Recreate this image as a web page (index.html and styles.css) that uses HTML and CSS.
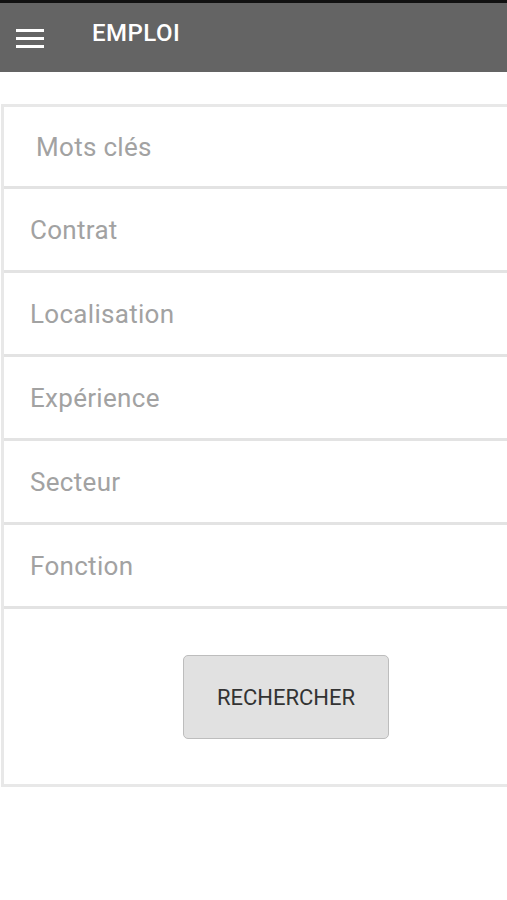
FILE: index.html
```html
<!DOCTYPE html>
<html lang="fr">
<head>
<meta charset="utf-8">
<title>Emploi</title>
<link rel="stylesheet" href="styles.css">
</head>
<body>
<header class="appbar">
  <button class="menu-btn" aria-label="Menu">
    <svg width="28" height="20" viewBox="0 0 28 20"><rect x="0" y="0" width="28" height="3" fill="#fff"/><rect x="0" y="8" width="28" height="3" fill="#fff"/><rect x="0" y="16" width="28" height="3" fill="#fff"/></svg>
  </button>
  <h1 class="title">EMPLOI</h1>
</header>
<main class="form">
  <div class="field first"><span class="placeholder">Mots clés</span></div>
  <div class="field"><span class="placeholder">Contrat</span></div>
  <div class="field"><span class="placeholder">Localisation</span></div>
  <div class="field"><span class="placeholder">Expérience</span></div>
  <div class="field"><span class="placeholder">Secteur</span></div>
  <div class="field"><span class="placeholder">Fonction</span></div>
  <div class="actions"><button class="search-btn">RECHERCHER</button></div>
</main>
</body>
</html>
```
FILE: styles.css
```css
html, body {
  margin: 0;
  padding: 0;
  background: #fff;
  font-family: Roboto, "Noto Sans", sans-serif;
  overflow: hidden;
}
.appbar {
  height: 69px;
  border-top: 3px solid #111;
  background: #646464;
  display: flex;
  align-items: center;
}
.menu-btn {
  border: 0;
  background: none;
  padding: 0;
  margin-left: 16px;
  width: 28px;
  height: 20px;
  display: flex;
  margin-top: 2px;
}
.title {
  margin: 0 0 0 48px;
  color: #fff;
  font-size: 24px;
  font-weight: 500;
  letter-spacing: 0.5px;
  margin-top: -10px;
}
.form {
  margin-top: 32px;
  margin-left: 1px;
  border-left: 3px solid #e8e8e8;
  border-top: 3px solid #e8e8e8;
}
.field {
  height: 81px;
  border-bottom: 3px solid #e3e3e3;
  display: flex;
  align-items: center;
  padding-left: 26px;
}
.field.first {
  height: 79px;
  padding-left: 32px;
}
.placeholder {
  color: #a2a2a2;
  font-size: 26px;
  letter-spacing: 0.3px;
}
.actions {
  height: 175px;
  border-bottom: 3px solid #e8e8e8;
  display: flex;
  align-items: center;
  padding-left: 179px;
}
.search-btn {
  width: 206px;
  height: 84px;
  background: #e1e1e1;
  border: 1px solid #bdbdbd;
  border-radius: 5px;
  font-family: Roboto, sans-serif;
  font-size: 22px;
  color: #333;
  padding: 0;
  padding-top: 2px;
}
```
